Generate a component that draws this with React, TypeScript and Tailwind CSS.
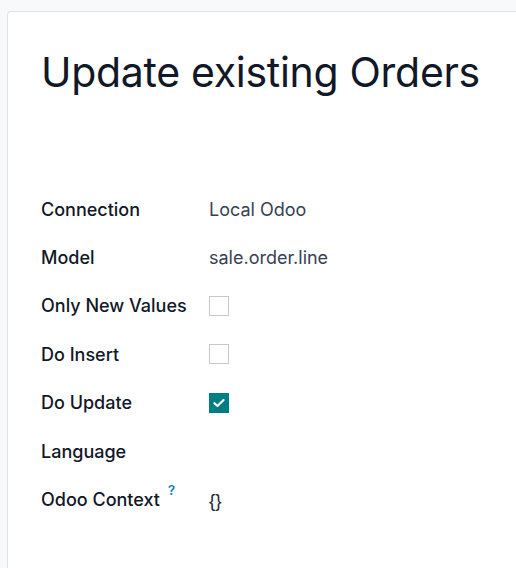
import React from "react";

const Box = ({ checked }: { checked?: boolean }) =>
  checked ? (
    <div className="w-[20px] h-[20px] bg-[#017e84] flex items-center justify-center">
      <svg width="12" height="10" viewBox="0 0 12 10">
        <path d="M1.5 5.2 L4.5 8 L10.5 2" stroke="white" strokeWidth="2.2" fill="none" strokeLinecap="round" strokeLinejoin="round" />
      </svg>
    </div>
  ) : (
    <div className="w-[20px] h-[20px] border border-[#c5c8cc] bg-white" />
  );

export default function App() {
  const rows: { label: React.ReactNode; value: React.ReactNode }[] = [
    { label: "Connection", value: <span>Local Odoo</span> },
    { label: "Model", value: <span>sale.order.line</span> },
    { label: "Only New Values", value: <Box /> },
    { label: "Do Insert", value: <Box /> },
    { label: "Do Update", value: <Box checked /> },
    { label: "Language", value: null },
    {
      label: (
        <span className="relative">
          Odoo Context
          <span className="absolute left-[127px] top-[-8px] text-[#0180a5] text-[13px] font-semibold">?</span>
        </span>
      ),
      value: (
        <span className="text-[19px] relative top-[2px] text-[#1f2937]" style={{ fontFamily: "'Liberation Sans', sans-serif" }}>
          {"{}"}
        </span>
      ),
    },
  ];
  return (
    <div className="w-[516px] h-[568px] bg-[#f8f9fa] pt-[11px] pl-[7px] overflow-hidden" style={{ fontFamily: "Inter, 'Noto Sans', sans-serif" }}>
      <div className="bg-white border-l border-t border-[#dee2e6] rounded-tl-[4px] h-[600px] w-[600px] pl-[33px] pt-[30px]">
        <h1 className="text-[41px] leading-[60px] text-[#111827] font-normal tracking-[-0.3px]">Update existing Orders</h1>
        <div className="mt-[83px] flex flex-col">
          {rows.map((r, i) => (
            <div key={i} className="flex items-center h-[48.4px]">
              <div className="w-[168px] text-[18px] font-medium text-[#111827]">{r.label}</div>
              <div className="text-[18px] text-[#374151]">{r.value}</div>
            </div>
          ))}
        </div>
      </div>
    </div>
  );
}
